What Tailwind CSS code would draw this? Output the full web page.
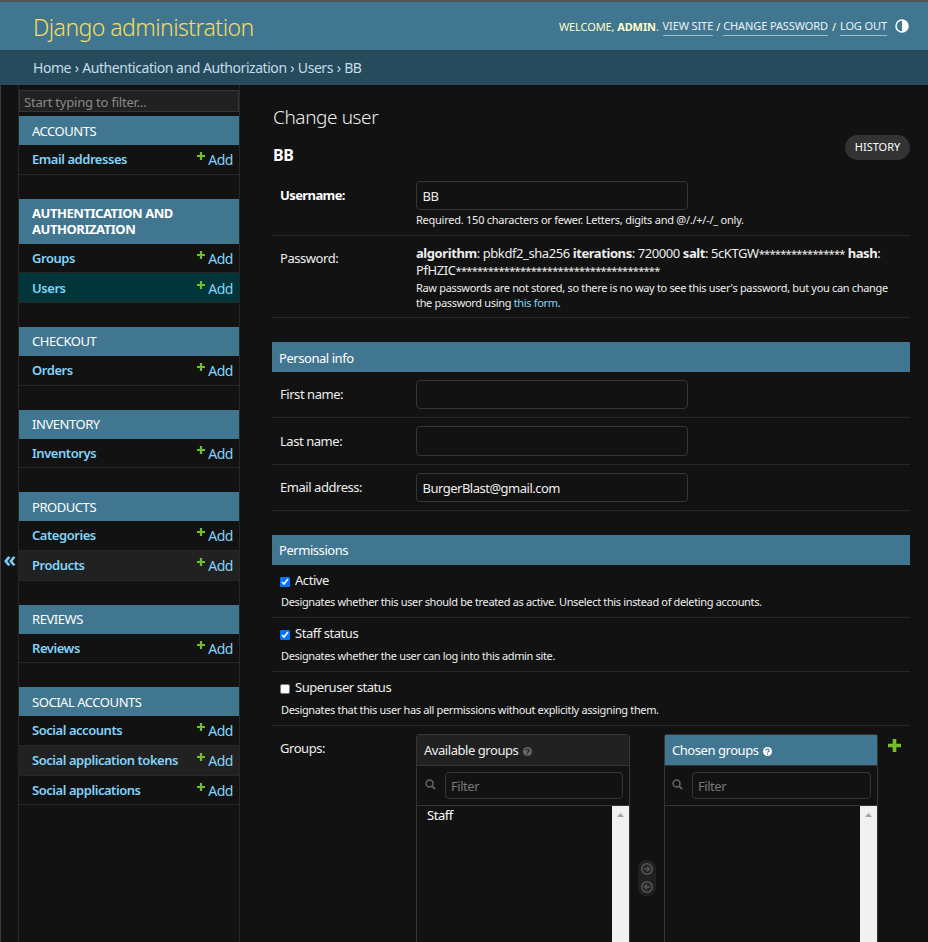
<!DOCTYPE html>
<html><head><meta charset="utf-8"><script src="https://cdn.jsdelivr.net/npm/@tailwindcss/browser@4"></script></head>
<body class="h-[942px] w-[928px] overflow-hidden bg-[#121212] text-[#eeeeee] font-['Noto_Sans','Open_Sans',sans-serif] text-[13px] tracking-[-0.45px]">
<div class="h-[2px] bg-[#555555]"></div>
<header class="h-[48px] bg-[#417690] flex items-center justify-between pl-[33px] pr-[19px]">
  <div class="text-[23px] font-light text-[#f5dd5d] tracking-[-0.55px] pt-[3px]">Django administration</div>
  <div class="flex items-center text-[11px] text-[#ffffcc] uppercase tracking-[-0.1px] pt-[2px]">
    <span class="mr-[1px]">Welcome, <b class="font-bold">admin</b>.&nbsp;</span>
    <a class="border-b border-[#ffffff80] text-[#ffffff]/90">View site</a><span class="mx-[3px]">/</span>
    <a class="border-b border-[#ffffff80] text-[#ffffff]/90">Change password</a><span class="mx-[4px]">/</span>
    <a class="border-b border-[#ffffff80] text-[#ffffff]/90">Log out</a>
    <svg class="ml-[8px] mb-[2px] w-[14px] h-[14px]" viewBox="0 0 14 14"><circle cx="7" cy="7" r="6" fill="#417690" stroke="#fff" stroke-width="1.5"/><path d="M7 1a6 6 0 0 1 0 12z" fill="#fff"/></svg>
  </div>
</header>
<nav class="h-[35px] bg-[#264b5d] flex items-center pl-[33px] text-[14px] text-[#c4dce8] tracking-[-0.45px]">Home<span class="mx-[0.5px]">&nbsp;›&nbsp;</span>Authentication and Authorization<span class="mx-[0.5px]">&nbsp;›&nbsp;</span>Users<span class="mx-[0.5px]">&nbsp;›&nbsp;</span>BB</nav>
<div class="flex h-[857px]">
  <div class="w-[19px] pl-px border-r border-[#272727] shrink-0 relative">
    <div class="absolute left-0 top-0 bottom-0 w-px bg-[#3a3a3a]"></div>
    <div class="pt-[458px] text-center text-[22px] leading-[30px] text-[#81d4fa] font-semibold">«</div>
  </div>
  <aside class="w-[221px] shrink-0 border-r border-[#272727] pt-[5px] text-[#81d4fa]">
    <div class="h-[22px] mb-[4px] bg-[#212121] border border-[#353535] px-[4px] pt-[3px] flex items-center text-[13px] text-[#8a8a8a] tracking-[-0.2px]">Start typing to filter...</div>

    <div class="mb-[24px]">
      <div class="h-[29px] bg-[#417690] text-white px-[13px] pt-[2px] flex items-center text-[13px]">ACCOUNTS</div>
      <div class="h-[29.667px] flex items-center justify-between pl-[13px] pr-[6px] border-b border-[#272727]"><span class="font-semibold">Email addresses</span><span class="flex items-start"><svg class="w-[8px] h-[8px] mr-[3px] mt-px" viewBox="0 0 10 10"><path d="M3.6 0h2.8v3.6H10v2.8H6.4V10H3.6V6.4H0V3.6h3.6z" fill="#70bf2b"/></svg><span class="text-[14px] leading-[16px] mt-[1px] tracking-[-0.45px]">Add</span></span></div>
    </div>

    <div class="mb-[24px]">
      <div class="h-[45px] bg-[#417690] text-white px-[13px] flex items-center text-[13px] leading-[16px] font-bold">AUTHENTICATION AND AUTHORIZATION</div>
      <div class="h-[29.667px] flex items-center justify-between pl-[13px] pr-[6px] pt-px border-b border-[#272727]"><span class="font-semibold">Groups</span><span class="flex items-start"><svg class="w-[8px] h-[8px] mr-[3px] mt-px" viewBox="0 0 10 10"><path d="M3.6 0h2.8v3.6H10v2.8H6.4V10H3.6V6.4H0V3.6h3.6z" fill="#70bf2b"/></svg><span class="text-[14px] leading-[16px] mt-[1px] tracking-[-0.45px]">Add</span></span></div>
      <div class="h-[29.667px] flex items-center justify-between pl-[13px] pr-[6px] pt-[2px] border-b border-[#272727] bg-[#00363a]"><span class="font-semibold">Users</span><span class="flex items-start"><svg class="w-[8px] h-[8px] mr-[3px] mt-0" viewBox="0 0 10 10"><path d="M3.6 0h2.8v3.6H10v2.8H6.4V10H3.6V6.4H0V3.6h3.6z" fill="#70bf2b"/></svg><span class="text-[14px] leading-[16px] tracking-[-0.45px]">Add</span></span></div>
    </div>

    <div class="mb-[24px]">
      <div class="h-[29px] bg-[#417690] text-white px-[13px] flex items-center text-[13px]">CHECKOUT</div>
      <div class="h-[29.667px] flex items-center justify-between pl-[13px] pr-[6px] border-b border-[#272727]"><span class="font-semibold">Orders</span><span class="flex items-start"><svg class="w-[8px] h-[8px] mr-[3px] mt-px" viewBox="0 0 10 10"><path d="M3.6 0h2.8v3.6H10v2.8H6.4V10H3.6V6.4H0V3.6h3.6z" fill="#70bf2b"/></svg><span class="text-[14px] leading-[16px] mt-[1px] tracking-[-0.45px]">Add</span></span></div>
    </div>

    <div class="mb-[24px]">
      <div class="h-[29px] bg-[#417690] text-white px-[13px] pt-px flex items-center text-[13px]">INVENTORY</div>
      <div class="h-[29.667px] flex items-center justify-between pl-[13px] pr-[6px] pt-px border-b border-[#272727]"><span class="font-semibold">Inventorys</span><span class="flex items-start"><svg class="w-[8px] h-[8px] mr-[3px] mt-px" viewBox="0 0 10 10"><path d="M3.6 0h2.8v3.6H10v2.8H6.4V10H3.6V6.4H0V3.6h3.6z" fill="#70bf2b"/></svg><span class="text-[14px] leading-[16px] mt-[1px] tracking-[-0.45px]">Add</span></span></div>
    </div>

    <div class="mb-[24px]">
      <div class="h-[29px] bg-[#417690] text-white px-[13px] pt-px flex items-center text-[13px]">PRODUCTS</div>
      <div class="h-[29.667px] flex items-center justify-between pl-[13px] pr-[6px] border-b border-[#272727]"><span class="font-semibold">Categories</span><span class="flex items-start"><svg class="w-[8px] h-[8px] mr-[3px] mt-px" viewBox="0 0 10 10"><path d="M3.6 0h2.8v3.6H10v2.8H6.4V10H3.6V6.4H0V3.6h3.6z" fill="#70bf2b"/></svg><span class="text-[14px] leading-[16px] mt-[1px] tracking-[-0.45px]">Add</span></span></div>
      <div class="h-[29.667px] flex items-center justify-between pl-[13px] pr-[6px] border-b border-[#272727] bg-[#212121]"><span class="font-semibold">Products</span><span class="flex items-start"><svg class="w-[8px] h-[8px] mr-[3px] mt-px" viewBox="0 0 10 10"><path d="M3.6 0h2.8v3.6H10v2.8H6.4V10H3.6V6.4H0V3.6h3.6z" fill="#70bf2b"/></svg><span class="text-[14px] leading-[16px] mt-[1px] tracking-[-0.45px]">Add</span></span></div>
    </div>

    <div class="mb-[24px]">
      <div class="h-[29px] bg-[#417690] text-white px-[13px] pt-px flex items-center text-[13px]">REVIEWS</div>
      <div class="h-[29.667px] flex items-center justify-between pl-[13px] pr-[6px] pt-px border-b border-[#272727]"><span class="font-semibold">Reviews</span><span class="flex items-start"><svg class="w-[8px] h-[8px] mr-[3px] mt-px" viewBox="0 0 10 10"><path d="M3.6 0h2.8v3.6H10v2.8H6.4V10H3.6V6.4H0V3.6h3.6z" fill="#70bf2b"/></svg><span class="text-[14px] leading-[16px] mt-[1px] tracking-[-0.45px]">Add</span></span></div>
    </div>

    <div>
      <div class="h-[29px] bg-[#417690] text-white px-[13px] pt-px flex items-center text-[13px]">SOCIAL ACCOUNTS</div>
      <div class="h-[29.667px] flex items-center justify-between pl-[13px] pr-[6px] border-b border-[#272727]"><span class="font-semibold">Social accounts</span><span class="flex items-start"><svg class="w-[8px] h-[8px] mr-[3px] mt-px" viewBox="0 0 10 10"><path d="M3.6 0h2.8v3.6H10v2.8H6.4V10H3.6V6.4H0V3.6h3.6z" fill="#70bf2b"/></svg><span class="text-[14px] leading-[16px] mt-[1px] tracking-[-0.45px]">Add</span></span></div>
      <div class="h-[29.667px] flex items-center justify-between pl-[13px] pr-[6px] pt-px border-b border-[#272727] bg-[#212121]"><span class="font-semibold">Social application tokens</span><span class="flex items-start"><svg class="w-[8px] h-[8px] mr-[3px] mt-px" viewBox="0 0 10 10"><path d="M3.6 0h2.8v3.6H10v2.8H6.4V10H3.6V6.4H0V3.6h3.6z" fill="#70bf2b"/></svg><span class="text-[14px] leading-[16px] mt-[1px] tracking-[-0.45px]">Add</span></span></div>
      <div class="h-[29.667px] flex items-center justify-between pl-[13px] pr-[6px] pt-px border-b border-[#272727]"><span class="font-semibold">Social applications</span><span class="flex items-start"><svg class="w-[8px] h-[8px] mr-[3px] mt-px" viewBox="0 0 10 10"><path d="M3.6 0h2.8v3.6H10v2.8H6.4V10H3.6V6.4H0V3.6h3.6z" fill="#70bf2b"/></svg><span class="text-[14px] leading-[16px] mt-[1px] tracking-[-0.45px]">Add</span></span></div>
    </div>
  </aside>

  <main class="flex-1 pl-[32px] pr-[18px] overflow-hidden">
    <div class="h-[50px] flex items-end pb-[4px] pl-px"><h1 class="text-[19px] font-light leading-[28px] tracking-[-0.4px]">Change user</h1></div>
    <div class="h-[46px] flex items-start justify-between">
      <h2 class="text-[16px] leading-[24px] mt-[8px] font-bold text-white pl-px">BB</h2>
      <a class="h-[25px] w-[65px] rounded-full bg-[#333333] text-[11px] flex items-center justify-center text-white tracking-[0px]">HISTORY</a>
    </div>

    <div class="h-[55px] border-b border-[#272727] flex">
      <div class="w-[144px] pl-[8px] pt-[5px] font-bold text-white tracking-[-0.6px]">Username:</div>
      <div>
        <div class="w-[272px] h-[29px] border border-[#353535] rounded-[4px] px-[5.5px] pt-[2px] flex items-center text-[13px]">BB</div>
        <div class="text-[11px] mt-[2px] tracking-[-0.25px]">Required. 150 characters or fewer. Letters, digits and @/./+/-/_ only.</div>
      </div>
    </div>

    <div class="h-[82px] border-b border-[#272727] flex pt-[9px]">
      <div class="w-[144px] pl-[8px] pt-[4px]">Password:</div>
      <div class="w-[485px]">
        <div class="leading-[17px] tracking-[-0.42px]"><b class="font-bold">algorithm</b>: pbkdf2_sha256 <b class="font-bold">iterations</b>: 720000 <b class="font-bold">salt</b>: 5cKTGW<span class="text-[11px] tracking-[-0.69px]">****************</span> <b class="font-bold">hash</b>: PfHZIC<span class="text-[11px] tracking-[-0.69px]">**************************************</span></div>
        <div class="text-[11px] leading-[15px] mt-[1px] tracking-[-0.33px]">Raw passwords are not stored, so there is no way to see this user's password, but you can change the password using <a class="text-[#81d4fa]">this form</a>.</div>
      </div>
    </div>

    <div class="mt-[24px] h-[30px] bg-[#417690] flex items-center pl-[7px] pt-[3px] text-[13px] text-white">Personal info</div>

    <div class="h-[46px] border-b border-[#272727] flex items-center">
      <div class="w-[144px] pl-[8px]">First name:</div>
      <div class="w-[272px] h-[29px] border border-[#353535] rounded-[4px]"></div>
    </div>
    <div class="h-[47px] border-b border-[#272727] flex items-center">
      <div class="w-[144px] pl-[8px] pt-[2px]">Last name:</div>
      <div class="w-[272px] h-[30px] mb-[1px] border border-[#353535] rounded-[4px]"></div>
    </div>
    <div class="h-[46px] border-b border-[#272727] flex items-center">
      <div class="w-[144px] pl-[8px]">Email address:</div>
      <div class="w-[272px] h-[29px] border border-[#353535] rounded-[4px] px-[5.5px] pt-[3px] flex items-center text-[13px] tracking-[-0.5px]">BurgerBlast@gmail.com</div>
    </div>

    <div class="mt-[24px] h-[30px] bg-[#417690] flex items-center pl-[7px] pt-px text-[13px] text-white">Permissions</div>

    <div class="h-[53px] border-b border-[#272727] pl-[8px] pt-[6px]">
      <div class="flex items-center h-[20px]"><input type="checkbox" checked class="w-[10px] h-[10px] mr-[5px] mt-px accent-[#0075ff]">Active</div>
      <div class="text-[11px] mt-[3px] pl-px tracking-[-0.35px]">Designates whether this user should be treated as active. Unselect this instead of deleting accounts.</div>
    </div>
    <div class="h-[54px] border-b border-[#272727] pl-[8px] pt-[6px]">
      <div class="flex items-center h-[20px]"><input type="checkbox" checked class="w-[10px] h-[10px] mr-[5px] mt-px accent-[#0075ff]">Staff status</div>
      <div class="text-[11px] mt-[4px] pl-px tracking-[-0.35px]">Designates whether the user can log into this admin site.</div>
    </div>
    <div class="h-[54px] border-b border-[#272727] pl-[8px] pt-[6px]">
      <div class="flex items-center h-[20px]"><input type="checkbox" class="w-[10px] h-[10px] mr-[5px] mt-px">Superuser status</div>
      <div class="text-[11px] mt-[4px] pl-px tracking-[-0.35px]">Designates that this user has all permissions without explicitly assigning them.</div>
    </div>

    <div class="flex pt-[8px]">
      <div class="w-[144px] pl-[8px] pt-[5px]">Groups:</div>
      <div class="w-[214px] h-[300px] border border-[#353535] rounded-t-[4px] border-b-0 shrink-0 flex flex-col">
        <div class="h-[31px] bg-[#212121] border-b border-[#353535] flex items-center pl-[7px] pt-[2px]">Available groups<svg class="w-[9px] h-[9px] ml-[5px]" viewBox="0 0 10 10"><circle cx="5" cy="5" r="5" fill="#666"/><path d="M3.2 3.8a1.8 1.6 0 1 1 2.6 1.5c-.6.3-.8.6-.8 1.1" fill="none" stroke="#212121" stroke-width="1.2"/><circle cx="5" cy="8" r=".7" fill="#212121"/></svg></div>
        <div class="h-[40px] border-b border-[#353535] flex items-center pl-[8px] pr-[6px]">
          <svg class="w-[11px] h-[11px] mr-[9px] mb-[3px] shrink-0" viewBox="0 0 12 12"><circle cx="5" cy="5" r="3.8" fill="none" stroke="#666" stroke-width="1.6"/><path d="M8 8l3 3" stroke="#666" stroke-width="2"/></svg>
          <div class="flex-1 h-[27px] border border-[#353535] rounded-[4px] px-[5px] pt-[2px] flex items-center text-[13px] text-[#777777]">Filter</div>
        </div>
        <div class="flex-1 flex">
          <div class="flex-1 pl-[10px] text-white leading-[18px]">Staff</div>
          <div class="w-[17px] bg-[#f0f0f0] flex justify-center pt-[7px]"><svg class="w-[7px] h-[4px]" viewBox="0 0 7 4"><path d="M3.5 0L7 4H0z" fill="#a3a3a3"/></svg></div>
        </div>
      </div>
      <div class="w-[34px] shrink-0 flex justify-center pt-[126px]">
        <div class="w-[18px] h-[36px] rounded-[8px] bg-[#212121] flex flex-col items-center justify-center gap-[6px]">
          <svg class="w-[12px] h-[12px]" viewBox="0 0 12 12"><circle cx="6" cy="6" r="5.2" fill="none" stroke="#555" stroke-width="1.6"/><path d="M3 6h5M6 3.5L8.5 6 6 8.5" fill="none" stroke="#555" stroke-width="1.6"/></svg>
          <svg class="w-[12px] h-[12px]" viewBox="0 0 12 12"><circle cx="6" cy="6" r="5.2" fill="none" stroke="#555" stroke-width="1.6"/><path d="M9 6H4M6 3.5L3.5 6 6 8.5" fill="none" stroke="#555" stroke-width="1.6"/></svg>
        </div>
      </div>
      <div class="w-[214px] h-[300px] border border-[#353535] rounded-t-[4px] border-b-0 shrink-0 flex flex-col">
        <div class="h-[31px] bg-[#417690] border-b border-[#353535] flex items-center pl-[7px] pt-[2px] text-white">Chosen groups<svg class="w-[9px] h-[9px] ml-[5px]" viewBox="0 0 10 10"><circle cx="5" cy="5" r="5" fill="#fff"/><path d="M3.2 3.8a1.8 1.6 0 1 1 2.6 1.5c-.6.3-.8.6-.8 1.1" fill="none" stroke="#417690" stroke-width="1.2"/><circle cx="5" cy="8" r=".7" fill="#417690"/></svg></div>
        <div class="h-[40px] border-b border-[#353535] flex items-center pl-[7px] pr-[6px]">
          <svg class="w-[11px] h-[11px] mr-[9px] mb-[3px] shrink-0" viewBox="0 0 12 12"><circle cx="5" cy="5" r="3.8" fill="none" stroke="#666" stroke-width="1.6"/><path d="M8 8l3 3" stroke="#666" stroke-width="2"/></svg>
          <div class="flex-1 h-[27px] border border-[#353535] rounded-[4px] px-[5px] pt-[2px] flex items-center text-[13px] text-[#777777]">Filter</div>
        </div>
        <div class="flex-1 flex">
          <div class="flex-1"></div>
          <div class="w-[17px] bg-[#f0f0f0] flex justify-center pt-[7px]"><svg class="w-[7px] h-[4px]" viewBox="0 0 7 4"><path d="M3.5 0L7 4H0z" fill="#a3a3a3"/></svg></div>
        </div>
      </div>
      <svg class="w-[13px] h-[13px] ml-[10px] mt-[5px] shrink-0" viewBox="0 0 10 10"><path d="M3.6 0h2.8v3.6H10v2.8H6.4V10H3.6V6.4H0V3.6h3.6z" fill="#70bf2b"/></svg>
    </div>
  </main>
</div>
</body></html>
